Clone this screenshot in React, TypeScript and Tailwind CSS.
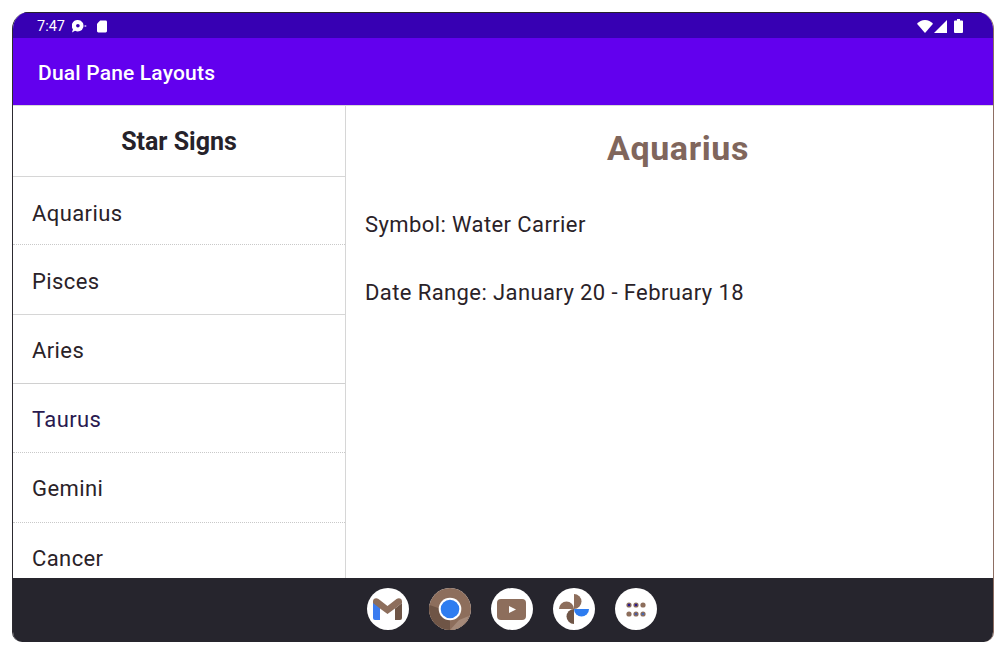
const signs = [
  { name: "Aquarius", h: "h-[68px] pt-[5px]", border: "border-dotted border-[#c9c9c9]", color: "text-[#2a2228]" },
  { name: "Pisces", h: "h-[70px] pt-[3px]", border: "border-solid border-[#d6d6d6]", color: "text-[#2a2228]" },
  { name: "Aries", h: "h-[69px] pt-[2px]", border: "border-solid border-[#d0d0d0]", color: "text-[#2a2228]" },
  { name: "Taurus", h: "h-[69px] pt-[2px]", border: "border-dotted border-[#c9c9c9]", color: "text-[#2a1a50]" },
  { name: "Gemini", h: "h-[70px] pt-[2px]", border: "border-dotted border-[#c9c9c9]", color: "text-[#2a2228]" },
];

function Wifi() {
  return (
    <svg width="16" height="13" viewBox="0 0 16 13">
      <path d="M0 3.800C2 1.400 5 0 8 0s6 1.400 8 3.800L8 13z" fill="#fff" />
    </svg>
  );
}
function Signal() {
  return (
    <svg width="13" height="13" viewBox="0 0 13 13">
      <path d="M13 0v13H0z" fill="#fff" />
    </svg>
  );
}
function Battery() {
  return (
    <svg width="9" height="14" viewBox="0 0 9 14">
      <path d="M3 0h3v1.500h2a1 1 0 0 1 1 1V13a1 1 0 0 1-1 1H1a1 1 0 0 1-1-1V2.500a1 1 0 0 1 1-1h2z" fill="#fff" />
    </svg>
  );
}
function Chat() {
  return (
    <svg width="15" height="13" viewBox="1 0.500 14 12">
      <path d="M6.500 0.500a5.300 5.300 0 1 1-2.700 9.900L1 12l.9-3A5.300 5.300 0 0 1 6.500 .5z" fill="#fff" />
      <circle cx="6.500" cy="5.800" r="1.700" fill="#3700b3" />
      <circle cx="13.500" cy="6" r="1" fill="#b9a3e8" />
    </svg>
  );
}
function Sd() {
  return (
    <svg width="10" height="13" viewBox="0 0 11 13">
      <path d="M3.500 0H9.500A1.500 1.500 0 0 1 11 1.500V11.500A1.500 1.500 0 0 1 9.500 13H1.500A1.500 1.500 0 0 1 0 11.500V3.500z" fill="#fff" />
    </svg>
  );
}

function Gmail() {
  return (
    <svg width="29" height="22" viewBox="0 0 29 22">
      <path d="M0 4h7v18H2a2 2 0 0 1-2-2z" fill="#3b7cf0" />
      <path d="M0 3.500C0 .5 3 -.5 5.500 1l9 7 9-7c2.500-1.500 5.500-.5 5.500 2.500V5l-7 5.500-7.500 5.500L7 10.500 0 5z" fill="#8d6e5c" />
      <path d="M22 10.500V22h5a2 2 0 0 0 2-2V5z" fill="#6f5546" />
    </svg>
  );
}
function Chrome() {
  return (
    <svg width="42" height="42" viewBox="0 0 42 42">
      <circle cx="21" cy="21" r="21" fill="#8d6e5c" />
      <path d="M21 42A21 21 0 0 1 0.500 17L12 21l9 9z" fill="#6f5546" />
      <path d="M21 42l9-10 10-4A21 21 0 0 1 21 42z" fill="#a58a7a" />
      <circle cx="21" cy="21" r="11.300" fill="#fff" />
      <circle cx="21" cy="21" r="9.300" fill="#2d7cf0" />
    </svg>
  );
}
function Youtube() {
  return (
    <svg width="29" height="21" viewBox="0 0 29 21">
      <rect width="29" height="21" rx="4" fill="#8d6e5c" />
      <path d="M12 7l7 3.500-7 3.500z" fill="#fff" />
    </svg>
  );
}
function Pinwheel() {
  return (
    <svg width="32" height="32" viewBox="0 0 32 32">
      <path d="M16 16V1A7.500 7.500 0 0 1 16 16z" fill="#8d6e5c" />
      <path d="M1 16A7.500 7.500 0 0 1 16 16z" fill="#8d6e5c" />
      <path d="M16 31A7.500 7.500 0 0 1 16 16z" fill="#6f5546" />
      <path d="M31 16A7.500 7.500 0 0 1 16 16z" fill="#2d7cf0" />
    </svg>
  );
}
function Apps() {
  const cells = [
    ["#8d6e5c", "#2a1a90"],
    ["#8d6e5c", "#2a1a90"],
    ["#8d6e5c", "#8d6e5c"],
    ["#8d6e5c", "#8d6e5c"],
    ["#8d6e5c", "#4a5aa0"],
    ["#8d6e5c", "#4a6ab0"],
  ];
  return (
    <svg width="20" height="15" viewBox="0 0 20 15">
      {cells.map(([ring, dot], i) => (
        <g key={i}>
          <circle cx={3 + (i % 3) * 7} cy={i < 3 ? 3 : 12} r="2.600" fill={ring} />
          <circle cx={3 + (i % 3) * 7} cy={i < 3 ? 3 : 12} r="1.300" fill={dot} />
        </g>
      ))}
    </svg>
  );
}

const navIcons = [
  { key: "gmail", el: <Gmail /> },
  { key: "chrome", el: <Chrome /> },
  { key: "yt", el: <Youtube /> },
  { key: "pin", el: <Pinwheel /> },
  { key: "apps", el: <Apps /> },
];

export default function App() {
  return (
    <div className="w-[1006px] h-[654px] bg-white pt-3 px-3 overflow-hidden [font-family:Roboto,sans-serif]">
      <div className="relative w-[982px] h-[630px] flex flex-col rounded-t-[17px] rounded-b-[10px] overflow-hidden bg-white border-l border-l-[#2c2a30] border-r border-r-[#8d6e63]">
        <div className="h-[26px] shrink-0 bg-[#3700b3] border-t border-t-[#26222c] flex items-center pl-6 pr-[30px] pt-[1px] text-white text-[14.500px]">
          <span className="w-[35px] pt-[1px]">7:47</span>
          <span className="flex items-center gap-[10px]">
            <Chat />
            <Sd />
          </span>
          <span className="ml-auto flex items-center gap-[1px]">
            <Wifi />
            <Signal />
            <span className="ml-[6px] flex">
              <Battery />
            </span>
          </span>
        </div>
        <div className="h-[67px] shrink-0 bg-[#6200ee] flex items-center pl-[25px] pt-[4px] text-white text-[21px] tracking-[.18px] font-medium">
          Dual Pane Layouts
        </div>
        <div className="h-px shrink-0 bg-[#d8d8d8]" />
        <div className="flex-1 min-h-0 flex">
          <div className="w-[333px] shrink-0 border-r border-r-[#d6d6d6] overflow-hidden">
            <div className="h-[71px] pt-[2px] flex items-center justify-center border-b border-b-[#d6d6d6] text-[25px] font-bold text-[#26222a]">
              Star Signs
            </div>
            {signs.map((s) => (
              <div key={s.name} className={`${s.h} flex items-center pl-[19px] text-[22px] tracking-[.4px] border-b ${s.border} ${s.color}`}>
                {s.name}
              </div>
            ))}
            <div className="h-[70px] flex items-center pl-[19px] text-[22px] tracking-[.4px] text-[#2a2228]">
              Cancer
            </div>
          </div>
          <div className="flex-1 min-w-0 pl-[19px]">
            <div className="h-[84px] pl-[17px] pr-[19px] flex items-center justify-center text-[34px] tracking-[.6px] font-bold text-[#80665c]">
              Aquarius
            </div>
            <div className="h-[68px] flex items-center text-[22px] tracking-[.4px] text-[#2a2228]">Symbol: Water Carrier</div>
            <div className="h-[68px] flex items-center text-[22px] tracking-[.4px] text-[#2a2228]">
              Date Range: January 20 - February 18
            </div>
          </div>
        </div>
        <div className="h-[64px] shrink-0 bg-[#26252d] pl-[17px] pb-[2px] flex items-center justify-center gap-5">
          {navIcons.map((n) => (
            <div key={n.key} className="w-[42px] h-[42px] rounded-full bg-white flex items-center justify-center">
              {n.el}
            </div>
          ))}
        </div>
      </div>
    </div>
  );
}
